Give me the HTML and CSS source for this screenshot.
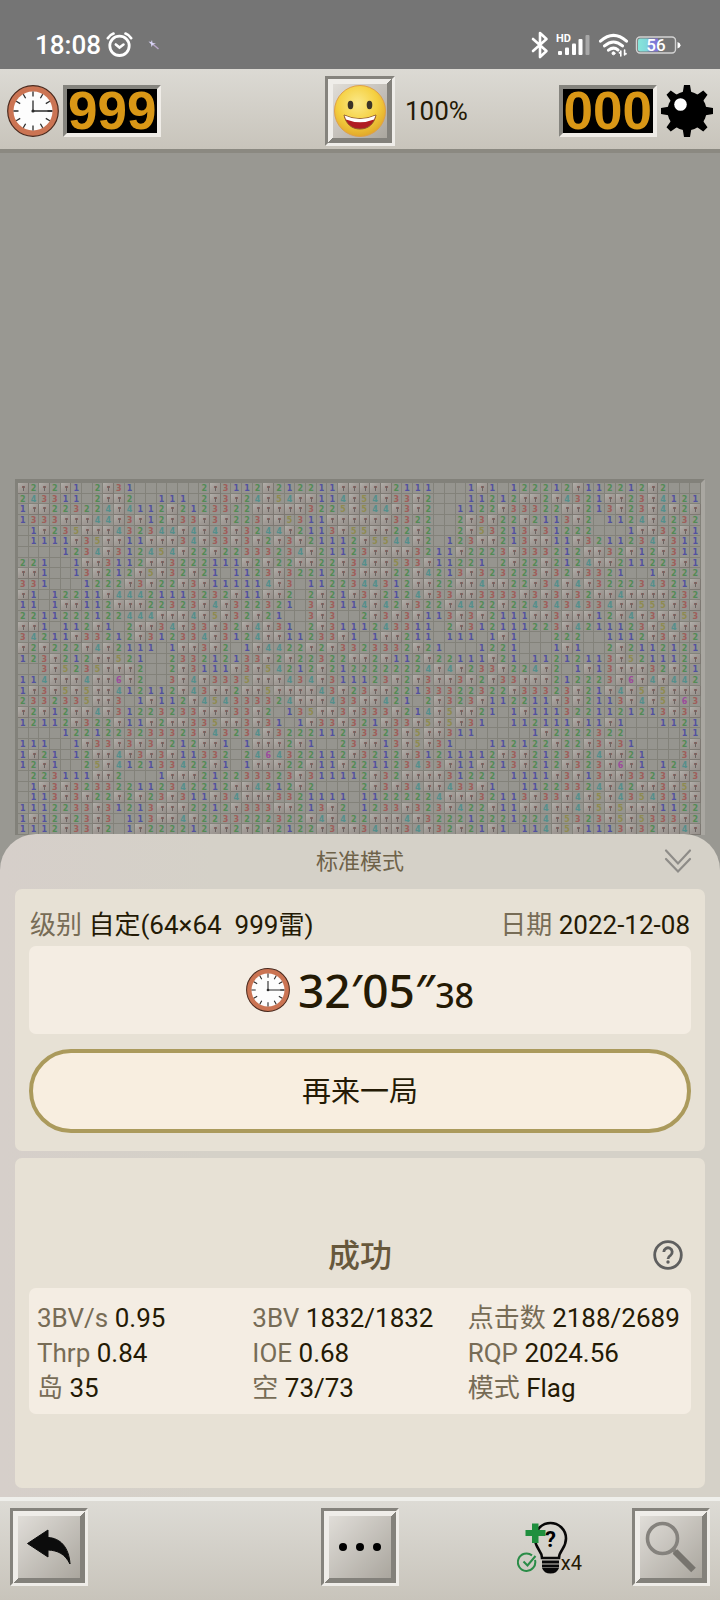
FILE: index.html
```html
<!DOCTYPE html>
<html lang="zh-CN">
<head>
<meta charset="utf-8">
<meta name="viewport" content="width=device-width, initial-scale=1">
<title>扫雷</title>
<link rel="stylesheet" href="styles.css">
</head>
<body>
<svg class="defs" aria-hidden="true">
  <symbol id="clock" viewBox="0 0 52 52">
    <circle cx="26" cy="26" r="25.3" fill="#cb7453" stroke="#4a2a1e" stroke-width="1.2"/>
    <circle cx="26" cy="26" r="19.5" fill="#fdfdfd"/>
    <g stroke="#2b2b2b" stroke-width="1.3">
      <path d="M26 6.5v5M26 40.500v5M6.500 26h5M40.500 26h5"/>
      <path d="M35.700 9.200l-2.300 4M16.300 9.200l2.300 4M35.700 42.800l-2.300-4M16.300 42.800l2.300-4M9.200 16.300l4 2.300M9.200 35.700l4-2.300M42.800 16.300l-4 2.300M42.800 35.700l-4-2.300"/>
      <path d="M26 15.500V26H45" fill="none"/>
    </g>
    <circle cx="26" cy="26" r="1.6" fill="#2b2b2b"/>
  </symbol>
</svg>

<div class="status">
  <span class="status-time">18:08</span>
  <svg class="alarm" width="27" height="26" viewBox="0 0 27 26" fill="none" stroke="#fff" stroke-linecap="round">
    <circle cx="13.500" cy="13.800" r="9.700" stroke-width="2.800"/>
    <path d="M1.800 6.200Q4 2.800 7.500 1.500M25.200 6.200Q23 2.800 19.500 1.500" stroke-width="2.600"/>
    <path d="M9.800 12.500l3.700 3 4-3" stroke-width="2.600"/>
  </svg>
  <svg class="wand" width="12" height="12" viewBox="0 0 12 12" fill="none">
    <path d="M3.500 4l7 6" stroke="#b9a6c9" stroke-width="1.500"/>
    <path d="M4 1l.5 3L8 4.500 5 5.500 3.500 8 3 5 .5 2.500 3 3z" fill="#d9d4f6"/>
  </svg>
  <span class="grow"></span>
  <svg width="18" height="28" viewBox="0 0 18 28" fill="none" stroke="#fff" stroke-width="2.600" stroke-linejoin="round" stroke-linecap="round">
    <path d="M2 8l13.500 12L9 26V2l6.500 6L2 20"/>
  </svg>
  <svg class="signal" width="35" height="24" viewBox="0 0 35 24">
    <text class="hd" x="0" y="9">HD</text>
    <g fill="#fff"><rect x="2" y="18" width="4" height="4" rx="1"/><rect x="9" y="14.500" width="4" height="7.500" rx="1"/><rect x="16" y="10.500" width="4" height="11.500" rx="1"/><rect x="22.500" y="6" width="4" height="16" rx="1"/></g>
    <rect x="29.500" y="2" width="4" height="20" rx="1" fill="#a8a8a8"/>
  </svg>
  <svg width="31" height="24" viewBox="0 0 31 24" fill="none" stroke="#fff" stroke-width="3" stroke-linecap="round">
    <path d="M2.500 8.200Q15.500-3.500 28.500 8.200M6.500 12.900Q15.500 5 24.500 12.900M10.500 17.200Q15.500 13.200 20 17"/>
    <circle cx="15.500" cy="20.300" r="1.500" fill="#fff" stroke-width="1"/>
    <path d="M22.800 18v5M21.500 20v-.5M26.600 17v5M28 20.500v.5" stroke-width="1.600"/>
  </svg>
  <svg class="battery" width="46" height="20" viewBox="0 0 46 20">
    <defs><linearGradient id="charge"><stop offset="0" stop-color="#86e6da"/><stop offset=".45" stop-color="#7fd7da"/><stop offset=".6" stop-color="#7c86d8"/><stop offset="1" stop-color="#8071d6"/></linearGradient></defs>
    <rect x="1.500" y="2" width="39" height="16" rx="3.500" fill="none" stroke="#d2d2d2" stroke-width="1.400"/>
    <path d="M5 3.500h18v13H5q-2 0-2-2v-9q0-2 2-2z" fill="url(#charge)"/>
    <path d="M42.500 7q3 1 3 3.200t-3 3.200z" fill="#fff"/>
    <text class="charge-text" x="21" y="15.500">56</text>
  </svg>
</div>

<header class="topbar">
  <div class="counter-group">
    <svg width="52" height="52" role="img" aria-label="时间"><use href="#clock"/></svg>
    <output class="counter">999</output>
  </div>
  <button class="tile face" type="button" aria-label="新游戏">
    <svg width="54" height="54" viewBox="0 0 54 54">
      <defs><radialGradient id="skin" cx=".45" cy=".35" r=".65"><stop offset="0" stop-color="#fbe98a"/><stop offset=".6" stop-color="#f5d040"/><stop offset="1" stop-color="#e2a92a"/></radialGradient></defs>
      <circle cx="27" cy="27" r="25.500" fill="url(#skin)" stroke="#dfa04a"/>
      <ellipse cx="17.500" cy="21" rx="2.800" ry="4.200" fill="#3b3428"/>
      <ellipse cx="36.500" cy="21" rx="2.800" ry="4.200" fill="#3b3428"/>
      <path d="M11 31Q27 38.500 43 31C41 40.500 35 45 27 45S13 40.500 11 31z" fill="#b01c22" stroke="#8d5a2a" stroke-width="1"/>
      <path d="M11.500 31.500Q27 38.500 42.500 31.500l-1.500 4Q27 41 13 35.500z" fill="#fff"/>
    </svg>
  </button>
  <span class="percent">100%</span>
  <div class="counter-group end">
    <output class="counter">000</output>
    <svg width="52" height="52" viewBox="-26 -26 52 52" role="img" aria-label="雷">
      <circle r="19.500"/>
      <g id="teeth"><path d="M-4.500-17l1.500-9h6l1.500 9zM-4.500 17l1.500 9h6l1.500-9zM-17-4.500l-9 1.500v6l9 1.500zM17-4.500l9 1.500v6l-9 1.500z"/></g>
      <use href="#teeth" transform="rotate(45)"/>
      <circle cx="-6.500" cy="-6.500" r="6.300" fill="#fff"/>
    </svg>
  </div>
</header>

<main class="stage">
  <div class="board" id="board" role="img" aria-label="雷区"></div>

  <section class="sheet">
    <div class="sheet-head">
      <h1>标准模式</h1>
      <button class="collapse" type="button" aria-label="收起">
        <svg width="28" height="26" viewBox="0 0 28 26" fill="none" stroke="#8e8c88" stroke-width="2.200" stroke-linecap="round"><path d="M2 2.500l12 13 12-13M2 11l12 12.500L26 11"/></svg>
      </button>
    </div>

    <div class="card record">
      <div class="meta">
        <span><span class="label">级别</span> 自定(64×64&nbsp; 999雷)</span>
        <span><span class="label">日期</span> 2022-12-08</span>
      </div>
      <div class="time">
        <svg width="44" height="44" aria-hidden="true"><use href="#clock"/></svg>
        <span class="time-main">32′05″</span><span class="time-sub">38</span>
      </div>
      <button class="again" type="button">再来一局</button>
    </div>

    <div class="card result">
      <div class="result-head">
        <h2>成功</h2>
        <button class="help" type="button" aria-label="帮助">
          <svg width="30" height="30" viewBox="0 0 30 30"><circle cx="15" cy="15" r="13.300" fill="none" stroke="#5f5f5f" stroke-width="2.800"/><path d="M10.800 12a4.200 4.200 0 1 1 6.700 3.400Q15 17 15 19" fill="none" stroke="#5f5f5f" stroke-width="2.800"/><circle cx="15" cy="22" r="1.700" fill="#5f5f5f"/></svg>
        </button>
      </div>
      <dl class="stats">
        <div><dt>3BV/s</dt> <dd>0.95</dd></div>
        <div><dt>3BV</dt> <dd>1832/1832</dd></div>
        <div><dt>点击数</dt> <dd>2188/2689</dd></div>
        <div><dt>Thrp</dt> <dd>0.84</dd></div>
        <div><dt>IOE</dt> <dd>0.68</dd></div>
        <div><dt>RQP</dt> <dd>2024.56</dd></div>
        <div><dt>岛</dt> <dd>35</dd></div>
        <div><dt>空</dt> <dd>73/73</dd></div>
        <div><dt>模式</dt> <dd>Flag</dd></div>
      </dl>
    </div>
  </section>
</main>

<footer class="toolbar">
  <button class="tile" type="button" aria-label="返回">
    <svg width="62" height="62" viewBox="0 0 62 62"><path d="M9.500 27.500L30 14v7.500C42 22 51 31 52 48 47 38 40 34.500 30 34v7z" fill="#0c0c0c" stroke="#0c0c0c" stroke-linejoin="round"/></svg>
  </button>
  <button class="tile more" type="button" aria-label="更多">
    <svg width="62" height="62" viewBox="0 0 62 62"><circle cx="14" cy="31" r="4"/><circle cx="31" cy="31" r="4"/><circle cx="48" cy="31" r="4"/></svg>
  </button>
  <div class="tools">
    <button class="hint" type="button" aria-label="提示 x4">
      <svg width="54" height="56" viewBox="516 1519 54 56">
        <path d="M541 1558C541 1550 534 1549 534 1538.500a15.500 15.500 0 0 1 31 0C565 1549 558 1550 558 1558z" fill="none" stroke="#080808" stroke-width="2.600"/>
        <path d="M541 1562h17M541 1566h17" stroke="#080808" stroke-width="2.800"/>
        <path d="M541 1568h17q-2 5.500-8.500 5.500t-8.500-5.500z" fill="#080808"/>
        <text class="hint-mark" x="549.500" y="1547">?</text>
        <path d="M531 1523.500h6.500v6.500h7v6h-7v7H531v-7h-6.500v-6h6.500z" fill="#1f8f3e"/>
        <path d="M534 1560a8.700 8.700 0 1 1-3-4.600M522.500 1561.500l4 4 8-9.500" fill="none" stroke="#2a8c47" stroke-width="2"/>
      </svg>
      <span>x4</span>
    </button>
    <button class="tile" type="button" aria-label="缩放">
      <svg width="62" height="62" viewBox="0 0 62 62" fill="none" stroke="#85827d"><circle cx="22.500" cy="22.500" r="15" stroke-width="3.600"/><path d="M33 33.500l3 3" stroke-width="4"/><path d="M35 35.500l18.500 18.500" stroke="#77746e" stroke-width="6.500"/></svg>
    </button>
  </div>
</footer>
<script src="board.js"></script>
</body>
</html>
```

FILE: styles.css
```css
* { box-sizing: border-box; }

body {
  margin: 0;
  min-height: 100vh;
  display: flex;
  flex-direction: column;
  background: #999892;
  color: #241a05;
  font-family: Roboto, "Noto Sans CJK SC", sans-serif;
  font-size: 26px;
}

h1, h2, dl, dd { margin: 0; }
svg { display: block; flex: none; }
.defs { position: absolute; width: 0; height: 0; }

button {
  padding: 0;
  border: 0;
  background: none;
  color: inherit;
  font: inherit;
  cursor: pointer;
}

/* status bar */
.status {
  display: flex;
  align-items: center;
  height: 69px;
  padding: 20px 39px 0 35px;
  gap: 7px;
  background: #757575;
  color: #fff;
}
.status-time { font-weight: 500; }
.alarm { margin-left: -2px; }
.wand { margin-left: 8px; }
.grow { flex: 1; }
.battery { margin-left: -1px; }
.hd { font-size: 11px; font-weight: 700; fill: #fff; }
.charge-text { font-size: 17px; font-weight: 500; fill: #fff; text-anchor: middle; }

/* top bar */
.topbar {
  display: grid;
  grid-template-columns: 1fr auto 1fr;
  align-items: center;
  height: 84px;
  padding: 4px 7px 0;
  border-bottom: 4px solid #8b8981;
  background: linear-gradient(#dcdad4, #c8c4bb);
}
.counter-group { display: flex; align-items: center; gap: 4px; grid-row: 1; grid-column: 1; }
.counter-group.end { grid-column: 3; justify-self: end; }
.percent { grid-row: 1; grid-column: 3; padding-left: 10px; }
.face { grid-row: 1; grid-column: 2; }

.counter {
  padding: 0 1px;
  border: 4px solid;
  border-color: #85847e #efece7 #efece7 #85847e;
  background: #000;
  color: #d99716;
  font: 700 53px/44px "Liberation Sans", sans-serif;
}

.tile {
  padding: 5px;
  border: 3px solid;
  border-color: #85837d #efede9 #efede9 #85837d;
  background:
    linear-gradient(135deg, #e0ddd8, #aaa69e) content-box,
    linear-gradient(135deg, #efede9 50%, #83817b 50%);
}

/* mine field */
.stage { flex: 1; display: grid; }
.board {
  grid-area: 1 / 1;
  align-self: start;
  display: grid;
  grid-template-columns: repeat(64, minmax(0, 1fr));
  grid-auto-rows: 1fr;
  aspect-ratio: 690 / 356;
  margin: 326px 15px 0;
  border: solid;
  border-width: 4px 4px 0 3px;
  border-color: #82817a #a9a7a1 #a9a7a1 #82817a;
  background: #85847c;
  font: 700 8px/11px "DejaVu Sans", sans-serif;
  text-align: center;
}
.board i {
  min-width: 0;
  min-height: 0;
  overflow: hidden;
  border: solid #83827a;
  border-width: 0 1px 1px 0;
  background: #96958f;
  font-style: normal;
}
.n1 { color: #5251a0; }
.n2 { color: #538b56; }
.n3 { color: #9f5e5a; }
.n4 { color: #548f8c; }
.n5 { color: #8f8b50; }
.n6 { color: #9c4b9c; }
.board .flag {
  border-color: #7d7872;
  background:
    linear-gradient(#6b6462, #6b6462) 5px 3px / 1px 5px no-repeat,
    linear-gradient(#8b6662, #8b6662) 4px 3px / 3px 2px no-repeat,
    linear-gradient(135deg, #b2afaa, #a09a95 50%, #96908b);
}

/* result sheet */
.sheet {
  grid-area: 1 / 1;
  align-self: end;
  padding: 0 15px 9px;
  border-radius: 36px 36px 0 0;
  background: linear-gradient(90deg, #d6cfca, #d5d1c8 30%, #d5d1c8);
}
.sheet-head { display: grid; align-items: center; height: 55px; padding-bottom: 2px; }
.sheet-head h1 {
  grid-area: 1 / 1;
  justify-self: center;
  padding-bottom: 4px;
  color: #6e6249;
  font-size: 22px;
  font-weight: 400;
}
.collapse { grid-area: 1 / 1; justify-self: end; margin-right: 13px; }

.card { padding: 18px 14px; border-radius: 7px; background: #e7e1d5; }
.record { display: grid; }
.meta { display: flex; justify-content: space-between; padding: 0 1px; line-height: 36px; }
.label, dt { color: #776c56; }
.time {
  display: flex;
  align-items: center;
  justify-content: center;
  height: 88px;
  margin: 3px 0 15px;
  border-radius: 7px;
  background: #f4ede3;
  font-family: "Noto Sans", sans-serif;
  font-weight: 500;
}
.time-main { padding-left: 8px; font-size: 46px; line-height: 60px; }
.time-sub { padding-top: 9px; font-size: 34px; line-height: 50px; }
.again {
  height: 84px;
  padding-bottom: 5px;
  border: 4px solid #ab9a5c;
  border-radius: 42px;
  background: #f8eee0;
  font-size: 29px;
}

.result { margin-top: 7px; padding: 72px 14px 74px; }
.result-head { display: grid; align-items: center; height: 48px; margin-bottom: 10px; }
.result-head h2 {
  grid-area: 1 / 1;
  justify-self: center;
  padding-bottom: 4px;
  color: #67583c;
  font-size: 32px;
  font-weight: 500;
}
.help { grid-area: 1 / 1; justify-self: end; margin-right: 8px; }
.stats {
  display: grid;
  grid-template-columns: repeat(3, minmax(0, 1fr));
  padding: 13px 8px 8px;
  border-radius: 7px;
  background: #f4ede3;
  line-height: 35px;
  white-space: nowrap;
}
.stats dt, .stats dd { display: inline; }

/* bottom bar */
.toolbar {
  display: grid;
  grid-template-columns: 1fr auto 1fr;
  align-items: center;
  height: 103px;
  padding: 0 10px 7px;
  border-top: 4px solid #efefeb;
  background: linear-gradient(#dddbd5, #c8c4bb);
}
.toolbar > .tile { justify-self: start; }
.tools { display: flex; justify-content: flex-end; align-items: center; gap: 50px; }
.hint { display: flex; align-items: flex-end; font-size: 20px; line-height: 24px; }
.hint span { margin-left: -10px; }
.hint-mark { font-size: 22px; font-weight: 700; text-anchor: middle; }
```

FILE: board.js
```js
// One string per row: digit = neighbour count, F = flagged mine, "." = empty.
const rows = [
  "F2F2F1.2F31......2F31" + "12F212211FFFFF2111...1" + "F1.122212F112212F2...",
  "243311.2FF2..111.2F3F" + "24F54FF114F54F33F2...1" + "1212FF2F4321FF23F4121",
  "1FF223224F4112F212332" + "2FFFFF3225F544F3F2..11" + "22F33322FF213F23F4F2F",
  "1333FFF44F3F12F33F3F2" + "23FF5311FFFFFF3322..2F" + "3F22F2113F2.1124F4232",
  ".1F235FFF432344F4F43F" + "3244F2113F55FF22F2..2F" + "53213F31222...1FF32F1",
  ".1111F35FF11FFF34F33F" + "3F2F3F21112F5544F2.123" + "FF213FF11F3211234F311",
  "....1234F312454F22F22" + "333234F21123FFFF3211F2" + "223F333212FF32F12F311",
  "221..1FF3112FF3222111" + "F2F22FF22F34FF533F1122" + "1.2F22F2124FF211223F1",
  "FF1..13F212F5F32F21.1" + "123F32212F3FFF22F4213F" + "323223F32F3321..1F222",
  "331...1222F3F22F3F111" + "114F3.1122344312FF22FF" + "4FF22F34F4F322234321F",
  "F1.12211F44421113232F" + "11FF2.2F21F3F2124F33FF" + "3333F3F3F32FF4FFFF232",
  "11.1FF112FFF22323F4F3" + "22321.3F3114F42F322F44" + "22F2243434334FF555F3F",
  "2211222122444FFF4F5F3" + "2F21..3F3..2F3F3F113F3" + "F2111FF3FFF12F4F3FF53",
  "FF1.112F1.2FF34F33F32" + "F4F31.2F311124331" + "1.2F3" + "12111223F42111" + "23F54FF",
  "34211F33212F312334F31" + "24FF11233F1.1FF211.111" + ".1F1...222..1112F3F32",
  "F2F222F4F2111.1FF3F2." + "1F4422F2F3323332F21..." + "1221...1F1..2F2112121",
  "123F212FF521..2332121" + "33F2F22322FF2F112F2211" + "1F21.11212113F52111" + "2F",
  "..3F5235FFF2..2F3111F" + "3F54212F2122222224F4F2" + "33F224F2.1F13FFF32F21",
  "114FFF4FF6F2..3F4F333" + "5FFF434F311123F2F3FF3F" + "2F33FFF212223F6F4F442",
  "1F3F5F5FF412112F43FF2" + "FF5FFFF43F23FF22133322" + "322F33323F21F4F5F5FFF",
  "2332335FF3.1F112F4543" + "33324FFF433FF421.2F323" + "F112211F3F2113F4F5F63",
  "F2F12FF4F31223233FFF3" + "3F2.135FF3F333F214F5FF" + "21.1F1113221121213F3F",
  "12112F322F11F2FF335FF" + "3F31.1F33F321F33F5F5F3" + "1..112111F11F1...1121",
  "....1221223233323F432" + "34F3222112F3323F5FF311" + ".....1F2222322.....11",
  "111..1F33F3F3F212FF1." + "1FFF2F1..23FF13F5F31.." + ".112122F22F3F31....2F",
  "1F21.12FF4F3F3F11332." + "2464322112F3212F312111" + "12F3F2123F24FF21...3F",
  "12F1..25F412133422F1." + "1FFF22F11F221123433F11" + "F213F212F323F6F1.124F",
  ".223111FF2...1FFF2122" + "33323F311112F32FFFF312" + "22.1111F3F13FF3323FF3",
  ".1F3F323322112342212F" + "F4212F2....2F3F34FF433" + "F1..11223324F42FF3F5F",
  ".113F3F22F2F23F311F34" + "FFF3321111.11222224FFF" + "32113F33F4F5F4354313F",
  "1112233F31213FFF2212F" + "333FF213F2.1233F323F42" + "2F11FF4FF4F5F5FFF1122",
  "1F12F23F3.113FF4F2233" + "222322F4F422FFF4F32221" + "2221224F5323F5F5333F2",
  "1112F33F2.1F222212FF2" + "F2F2122F3FF34FF34F32F2" + "1F1.114F5F1113F32FF4F"
];

const board = document.getElementById("board");
for (const row of rows) {
  for (const mark of row) {
    const cell = document.createElement("i");
    if (mark === "F") {
      cell.className = "flag";
    } else if (mark !== ".") {
      cell.className = "n" + mark;
      cell.textContent = mark;
    }
    board.append(cell);
  }
}
```
